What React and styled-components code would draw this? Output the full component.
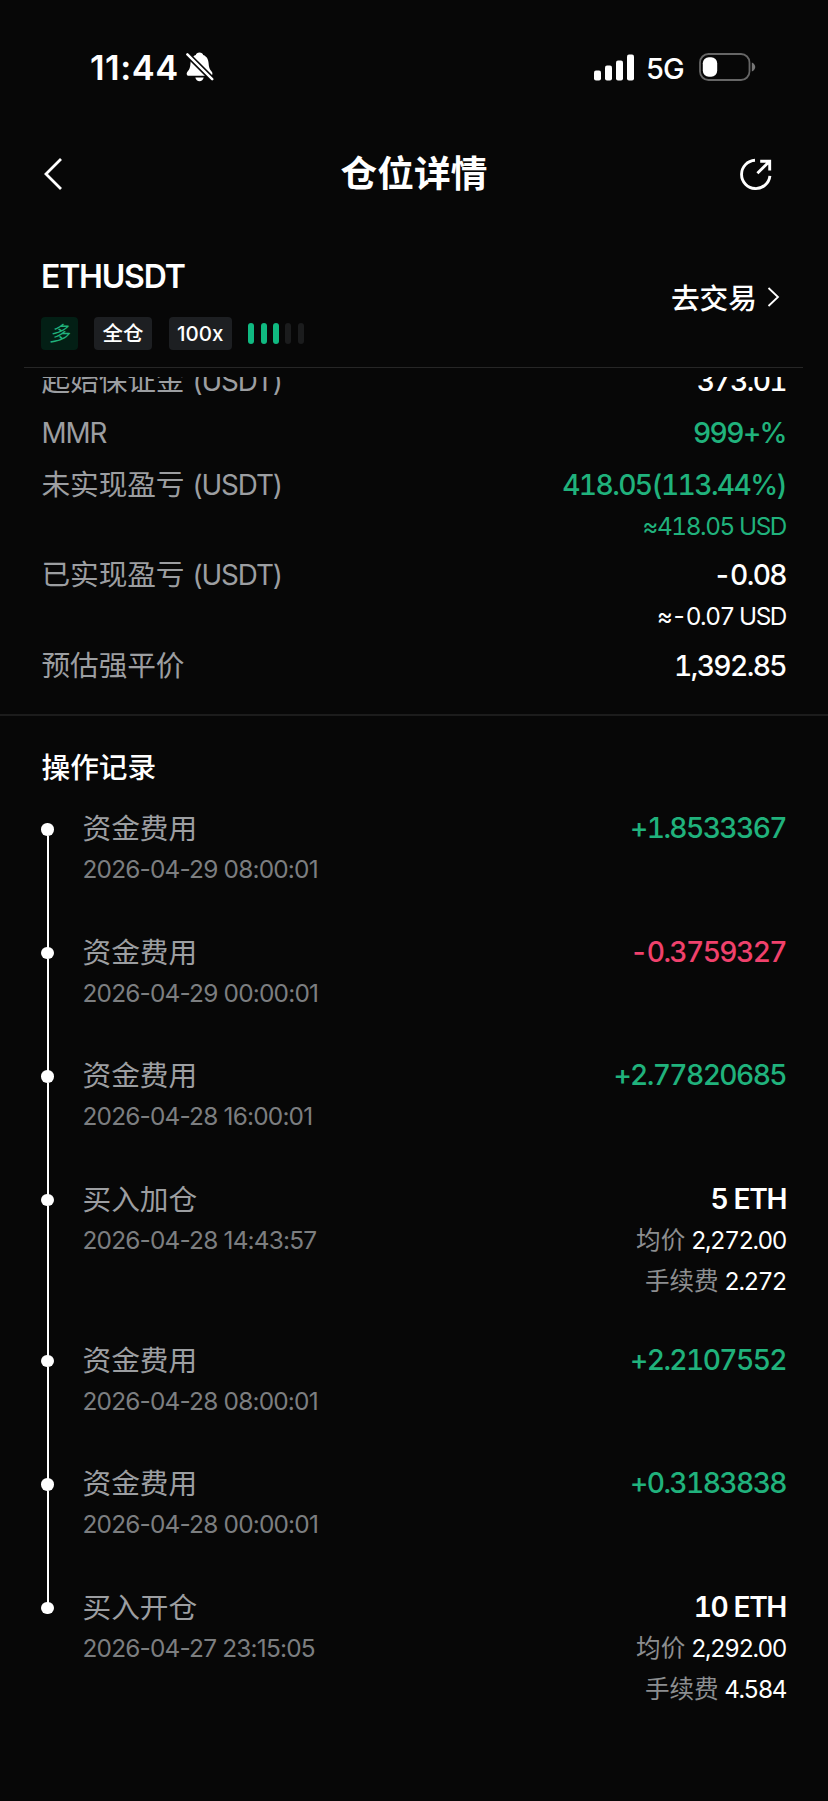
import React from "react";
import styled, { createGlobalStyle } from "styled-components";

const details = [
  { label: "起始保证金", unit: "(USDT)", value: "373.01" },
  { unit: "MMR", value: "999+%", color: "#20b27c" },
  {
    label: "未实现盈亏",
    unit: "(USDT)",
    value: "418.05(113.44%)",
    sub: "≈418.05 USD",
    color: "#20b27c",
  },
  {
    label: "已实现盈亏",
    unit: "(USDT)",
    value: "-0.08",
    sub: "≈-0.07 USD",
  },
  { label: "预估强平价", value: "1,392.85" },
];

const records = [
  { title: "资金费用", time: "2026-04-29 08:00:01", value: "+1.8533367" },
  { title: "资金费用", time: "2026-04-29 00:00:01", value: "-0.3759327" },
  { title: "资金费用", time: "2026-04-28 16:00:01", value: "+2.77820685" },
  {
    title: "买入加仓",
    time: "2026-04-28 14:43:57",
    amount: "5 ETH",
    price: "2,272.00",
    fee: "2.272",
  },
  { title: "资金费用", time: "2026-04-28 08:00:01", value: "+2.2107552" },
  { title: "资金费用", time: "2026-04-28 00:00:01", value: "+0.3183838" },
  {
    title: "买入开仓",
    time: "2026-04-27 23:15:05",
    amount: "10 ETH",
    price: "2,292.00",
    fee: "4.584",
  },
];

export default function App() {
  return (
    <Page>
      <GlobalStyle />
      <StatusBar>
        <Clock>11:44</Clock>
        <BellOff />
        <StatusRight>
          <Signal />
          <Network>5G</Network>
          <Battery />
        </StatusRight>
      </StatusBar>

      <Header>
        <IconButton aria-label="back">
          <svg width="20" height="34" viewBox="0 0 20 34" fill="none">
            <path d="M18 2L3 17L18 32" stroke="#fff" strokeWidth="2.8" />
          </svg>
        </IconButton>
        <Title>仓位详情</Title>
        <IconButton aria-label="share">
          <svg width="34" height="34" viewBox="0 0 34 34" fill="none">
            <path
              d="M16 3.2A14.2 14.2 0 1 0 30.9 18.8"
              stroke="#fff"
              strokeWidth="2.9"
            />
            <path
              d="M18.4 16.2L30 4.8M21.2 4.2H30.7V13.6"
              stroke="#fff"
              strokeWidth="2.9"
            />
          </svg>
        </IconButton>
      </Header>

      <Position>
        <div>
          <Symbol>ETHUSDT</Symbol>
          <Tags>
            <Tag $long>多</Tag>
            <Tag>全仓</Tag>
            <Tag>100x</Tag>
            <Risk>
              {[1, 1, 1, 0, 0].map((on, i) => (
                <RiskBar key={i} $on={on} />
              ))}
            </Risk>
          </Tags>
        </div>
        <TradeLink>
          去交易
          <svg width="13" height="20" viewBox="0 0 13 20" fill="none">
            <path d="M1.5 1L11 10L1.5 19" stroke="#fff" strokeWidth="1.8" />
          </svg>
        </TradeLink>
      </Position>

      <Details>
        {details.map((item) => (
          <DetailRow key={item.label || item.unit}>
            <Label>
              {item.label} {item.unit && <Unit>{item.unit}</Unit>}
            </Label>
            <DetailValue $color={item.color}>
              <Value>{item.value}</Value>
              {item.sub && <SubValue>{item.sub}</SubValue>}
            </DetailValue>
          </DetailRow>
        ))}
      </Details>

      <SectionTitle>操作记录</SectionTitle>
      <Timeline>
        {records.map((item) => (
          <Record key={item.time} $trade={!!item.amount}>
            <Rail>
              <Dot />
            </Rail>
            <RecordInfo>
              <RecordTitle>{item.title}</RecordTitle>
              <Time>{item.time}</Time>
            </RecordInfo>
            {item.amount ? (
              <RecordValue>
                <Amount>{item.amount}</Amount>
                <Meta>
                  均价 <b>{item.price}</b>
                </Meta>
                <Meta>
                  手续费 <b>{item.fee}</b>
                </Meta>
              </RecordValue>
            ) : (
              <RecordValue>
                <Change $down={item.value[0] === "-"}>{item.value}</Change>
              </RecordValue>
            )}
          </Record>
        ))}
      </Timeline>
    </Page>
  );
}

function BellOff() {
  return (
    <svg width="28" height="30" viewBox="0 0 28 30">
      <path
        d="M13.5 0.5C15.6 0.5 16.8 1.8 17.2 3C21 4.4 22.4 7.8 22.6 11.2C22.8 15.6 23.8 17.4 25.6 19.4C27 21 26.6 23.8 24.4 23.8H2.8C0.6 23.8 0 21.2 1.6 19.4C3.4 17.4 4.3 15.6 4.5 11.2C4.7 7.8 6 4.4 9.8 3C10.2 1.8 11.4 0.5 13.5 0.5Z"
        fill="#fff"
      />
      <path
        d="M9.3 25.6H17.7C17.2 28 15.5 29.2 13.5 29.2S9.8 28 9.3 25.6Z"
        fill="#fff"
      />
      <path d="M0.5 1.5L26.5 27.5" stroke="#070707" strokeWidth="5.6" />
      <path
        d="M1.4 2.4L26.2 27.2"
        stroke="#fff"
        strokeWidth="2.5"
        strokeLinecap="round"
      />
    </svg>
  );
}

function Signal() {
  return (
    <svg width="40" height="27" viewBox="0 0 40 27" fill="#fff">
      <rect x="0" y="16.5" width="7" height="10" rx="2" />
      <rect x="11" y="11.5" width="7" height="15" rx="2" />
      <rect x="22" y="6.5" width="7" height="20" rx="2" />
      <rect x="33" y="0.5" width="7" height="26" rx="2" />
    </svg>
  );
}

function Battery() {
  return (
    <svg width="57" height="28" viewBox="0 0 57 28">
      <rect
        x="1"
        y="1"
        width="49.5"
        height="26"
        rx="8.5"
        fill="none"
        stroke="#666"
        strokeWidth="1.8"
      />
      <rect x="3.8" y="4.3" width="14.4" height="19.4" rx="6" fill="#fff" />
      <path d="M52.8 9.5C57.4 11.2 57.4 16.8 52.8 18.5Z" fill="#777" />
    </svg>
  );
}

const GlobalStyle = createGlobalStyle`
  * {
    box-sizing: border-box;
  }
  body {
    margin: 0;
    background: #070707;
  }
`;

const Page = styled.div`
  width: 828px;
  height: 1801px;
  overflow: hidden;
  background: #070707;
  color: #fff;
  font-family: Inter, "Noto Sans CJK SC", sans-serif;
`;

const StatusBar = styled.div`
  display: flex;
  align-items: center;
  height: 134px;
  padding: 0 72px 0 90px;
`;

const Clock = styled.span`
  width: 96px;
  font-size: 34.5px;
  font-weight: 600;
  letter-spacing: 0.5px;
`;

const StatusRight = styled.div`
  display: flex;
  align-items: center;
  margin-left: auto;
`;

const Network = styled.span`
  margin: 2px 15px 0 12px;
  font-size: 29px;
  font-weight: 500;
  letter-spacing: -0.8px;
`;

const Header = styled.header`
  display: flex;
  align-items: center;
  justify-content: space-between;
  height: 80px;
  padding: 0 55px 0 43px;
`;

const IconButton = styled.button`
  display: flex;
  width: 34px;
  padding: 0;
  border: 0;
  background: none;
`;

const Title = styled.h1`
  margin: 0;
  padding-left: 12px;
  font-size: 36.7px;
  font-weight: 600;
  line-height: 54px;
`;

const Position = styled.section`
  display: flex;
  align-items: center;
  justify-content: space-between;
  height: 154px;
  margin: 0 25px 0 24px;
  padding: 22px 23px 0 17px;
  border-bottom: 1px solid #262626;
`;

const Symbol = styled.h2`
  margin: 0;
  font-size: 32px;
  font-weight: 600;
  line-height: 48px;
  letter-spacing: -1.2px;
`;

const Tags = styled.div`
  display: flex;
  align-items: center;
  gap: 16.5px;
  margin-top: 16px;
`;

const Tag = styled.span`
  height: 33px;
  padding: 0 ${(props) => (props.$long ? 8 : 8.5)}px;
  border-radius: 4px;
  background: ${(props) => (props.$long ? "#031f15" : "#1d1f22")};
  color: ${(props) => (props.$long ? "#20b27c" : "#fff")};
  font-size: 20.5px;
  font-weight: ${(props) => (props.$long ? 400 : 500)};
  font-style: ${(props) => (props.$long ? "italic" : "normal")};
  line-height: 33px;
`;

const Risk = styled.div`
  display: flex;
  gap: 6.3px;
`;

const RiskBar = styled.i`
  width: 6px;
  height: 21px;
  border-radius: 3px;
  background: ${(props) => (props.$on ? "#10b981" : "#1b1c1d")};
`;

const TradeLink = styled.a`
  display: flex;
  align-items: center;
  gap: 10px;
  margin-bottom: 10px;
  font-size: 28.7px;
  font-weight: 500;
`;

const Details = styled.section`
  display: flex;
  flex-direction: column;
  justify-content: flex-end;
  height: 339px;
  margin-top: 9px;
  padding: 0 42px 18px 41.5px;
  overflow: hidden;
  border-bottom: 2px solid #1c1c1c;
`;

const DetailRow = styled.div`
  display: flex;
  flex-shrink: 0;
  justify-content: space-between;
  padding-bottom: 8px;
  line-height: 44px;
`;

const Label = styled.span`
  color: #9c9ea1;
  font-size: 28.7px;
  letter-spacing: -0.1px;
`;

const Unit = styled.span`
  font-size: 27.8px;
  letter-spacing: -1.1px;
`;

const DetailValue = styled.div`
  display: flex;
  flex-direction: column;
  align-items: flex-end;
  color: ${(props) => props.$color || "#fff"};
  font-variant-numeric: tabular-nums;
`;

const Value = styled.span`
  font-size: 28.2px;
  font-weight: 500;
  letter-spacing: -1.6px;
`;

const SubValue = styled.span`
  font-size: 24.3px;
  line-height: 38.6px;
  letter-spacing: -1.4px;
`;

const SectionTitle = styled.h3`
  margin: 31px 42px 0 41.5px;
  font-size: 28.7px;
  font-weight: 500;
  line-height: 41px;
`;

const Timeline = styled.ul`
  margin: 20px 42px 0 41px;
  padding: 0;
  list-style: none;
`;

const Rail = styled.div`
  display: flex;
  flex-direction: column;
  align-items: center;
  width: 13px;
  margin-right: 28.5px;
  padding-top: 15px;
  &::after {
    content: "";
    flex: 1;
    width: 2px;
    margin-bottom: -16px;
    background: #fff;
  }
`;

const Record = styled.li`
  display: flex;
  height: ${(props) => (props.$trade ? 160.8 : 123.6)}px;
  line-height: 41.2px;
  &:last-child ${Rail}::after {
    display: none;
  }
`;

const Dot = styled.i`
  width: 12.5px;
  height: 12.5px;
  border-radius: 50%;
  background: #fff;
`;

const RecordInfo = styled.div`
  display: flex;
  flex-direction: column;
`;

const RecordTitle = styled.span`
  color: #9c9ea1;
  font-size: 28.7px;
`;

const Time = styled.span`
  color: #7c7e80;
  font-size: 24.4px;
  letter-spacing: -0.8px;
`;

const RecordValue = styled.div`
  display: flex;
  flex-direction: column;
  align-items: flex-end;
  margin-left: auto;
  font-variant-numeric: tabular-nums;
`;

const Amount = styled.span`
  font-size: 28.2px;
  font-weight: 600;
  letter-spacing: -1.4px;
`;

const Change = styled.span`
  color: ${(props) => (props.$down ? "#f0416c" : "#20b27c")};
  font-size: 28.2px;
  font-weight: 500;
  letter-spacing: -1.6px;
`;

const Meta = styled.span`
  color: #8c8e90;
  font-size: 24.6px;
  word-spacing: -1px;
  b {
    color: #fff;
    font-size: 24.2px;
    font-weight: 400;
    letter-spacing: -1.5px;
  }
`;
